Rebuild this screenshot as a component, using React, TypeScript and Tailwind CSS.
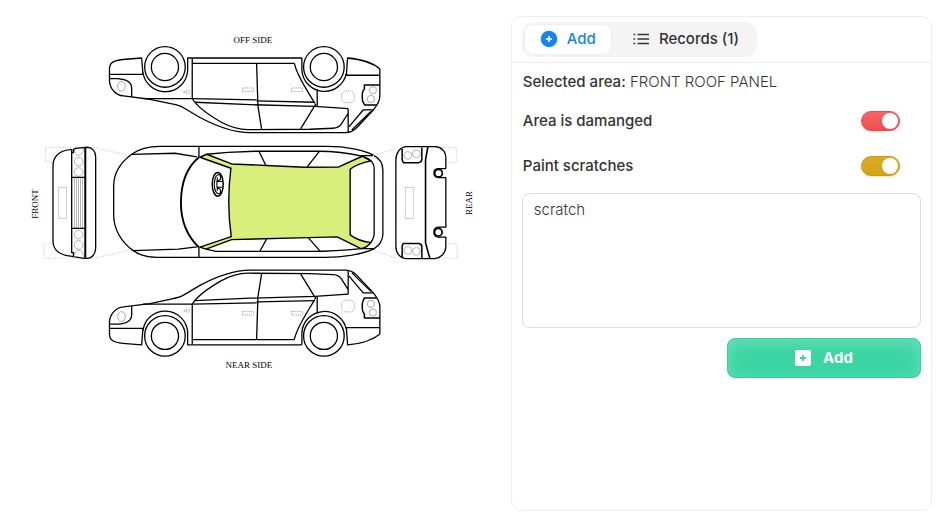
import { useState } from "react";

const ink = { fill: "none", stroke: "#000", strokeWidth: 1.3, strokeLinejoin: "round" as const };
const pale = { fill: "none", stroke: "#aaa", strokeWidth: 1 };
const dots = { fill: "none", stroke: "#999", strokeWidth: 1, strokeDasharray: "1 1" };
const faintDots = { fill: "none", stroke: "#ccc", strokeWidth: 1, strokeDasharray: "1.2 1.2" };

function SideView() {
  return (
    <g>
      <g {...ink}>
        <path d="M109.5 334V322C110 314 116 307.500 123.500 307L150 303.700L172 299Q180 297.500 184 295L200 285.500C216 277 232 270.500 250 270.300H346Q352 270.500 357 275.500L373.500 293Q380 301 380 307V334Q370 343 347.700 345L346.500 327.700H380" />
        <path d="M109.500 328.500H143L141.700 345L123 343.500C113 342.500 109.500 340 109.500 334" />
        <path d="M109.500 324.300H118C127 323.500 131.700 320 131.700 315V306.300" />
        <path d="M143 304.300H192.500L256.700 303M256.700 302L315 300.700" />
        <path d="M195 300.700L250 298.300L315 296.500L348.300 294.300" />
        <path d="M192.300 304.500C197 296 209 288 221 281Q235 273.500 248 273.300L310 273.700L333 274.700Q339 275 341.500 279L348.300 289.700M348.300 270.500V294.300" />
        <path d="M349 276L363.300 293H373.300M352 273L371 291.500" />
        <path d="M261.700 274L258 297L256.700 339.500M300.700 274L316 299M315 299.500C307 313 297 327 294.500 339.500M317.300 296.300V313.500" />
        <path d="M192.300 304V345M192.300 339.700H294.500M192.300 345H302" />
        <path d="M192 345H187.700V332A22.500 22.500 0 0 0 143 330.500" />
        <path d="M302 345V333A22.500 22.500 0 0 1 346.500 329.500" />
        <circle cx="165" cy="336" r="20.300" />
        <circle cx="165" cy="336" r="13.600" />
        <circle cx="324" cy="336" r="20.300" />
        <circle cx="324" cy="336" r="13.600" />
        <path strokeWidth="1.500" d="M377 298H364.700L363.500 300.500Q362.300 302 362.400 307Q362.300 312 364.500 314V318H380" />
      </g>
      <g {...pale}>
        <ellipse cx="121.500" cy="316.700" rx="3.800" ry="5" />
        <circle cx="371" cy="304" r="3.600" />
        <circle cx="373" cy="312.700" r="3.600" />
        <path d="M187 309.500L183.500 311L187 312.500V309.500M188.500 309.500H190Q189.500 311.500 188.700 313" strokeWidth="0.700" />
      </g>
      <g {...dots}>
        <rect x="242.500" y="311.500" width="11" height="3.500" />
        <rect x="291.500" y="311.500" width="11" height="3.500" />
        <rect x="341.700" y="300.300" width="12.700" height="11.700" rx="4" />
      </g>
    </g>
  );
}

function TopView() {
  return (
    <g>
      <g {...ink}>
        <path d="M199 146.500H160C148 146.500 139 149 131.700 154.300C120 163 113.700 173 113.700 186V215C113.700 229 121 242 133.300 250.700C140 255.500 147 257.500 157 257.500H325C343 257.500 364 254 374 249C380 245 383 240 383 234V170C383 163 379 158 373 155C364 150 346 146.500 328 146.500Z" />
        <path d="M131.700 154.500L175 153.300L197 157M133.300 250.700L178.300 249.300L197 247M199 146.500V157M199 247.500V257.500" />
        <path strokeWidth="1.900" d="M199.300 157C187 167 181 184 181 203C181 221 188 237 199.300 247.700" />
        <path d="M206.700 154.300L228 152.500L255 151.300H318Q342 151.300 361 156C369 158 374.300 162 374.300 169V233C374.300 240 369 247 361 248.700Q335 251.500 311.700 251.500H216L206 249.300" />
        <path d="M361 155.700H373.300M361 248.700H375M259 151.300L266 165.500M319.300 151.700L307.300 167M266.700 239L260 251.300M308.300 237.700L320 251" />
      </g>
      <path
        d="M200 157.300L206.700 154.300L231.700 164L266 165.500L305 167.300L339 167L362.300 156.300L371 161C362 163 355 165 350.300 169.300V235Q358 241 371 242.700Q367 247.500 361 248.700L337.300 237L308 237.700L231.700 239.700L206 249.300L200 247.300L231.300 236.700Q226.500 203 231 168.300Z"
        fill="#d9ef7b"
        stroke="#000"
        strokeWidth="1.400"
        strokeLinejoin="round"
      />
      <g fill="none" stroke="#000">
        <ellipse cx="217.800" cy="184.300" rx="5.500" ry="11.800" strokeWidth="1.500" />
        <path
          strokeWidth="1.100"
          d="M220.500 175.500Q218 173.500 216 176.500Q214.300 180 214.300 184.300Q214.300 189 216 192Q218 195 220.500 193M220.500 175.500V179.500L217.500 181.500H222.500M220.500 193V189.500L217.500 187.300H222.500M217.500 177.500Q216.300 184 217.500 191"
        />
      </g>
    </g>
  );
}

function FrontView() {
  return (
    <g>
      <g {...faintDots}>
        <path d="M76 147.500H45.500V162H52M52 243.700H44V258.300H78M91 147L130 155.700M91 259.300L130 250" />
      </g>
      <g {...pale} stroke="#b5b5b5">
        <path d="M74.500 149.500Q75 155.500 79 155.500Q83 155 83.500 149M74.500 255.500Q75 250.500 79 250.300Q83 250.500 83.500 257" />
        <circle cx="78.700" cy="161.700" r="4.300" />
        <circle cx="78.700" cy="172" r="4.300" />
        <circle cx="78.700" cy="234.700" r="4.300" />
        <circle cx="78.700" cy="245" r="4.300" />
        <path d="M74.500 178V228M76.500 178V228M78.500 178V228M80.500 178V228M82.500 178V228" />
      </g>
      <g {...ink}>
        <path d="M71.700 152.700V149.500C60 150.500 53 156 53 166.500V241C53 250 60 255.500 72 256.500L84 258.500H87C92 258.500 95.700 254 95.700 248V157C95.700 151 92 147.300 87 147.300L76 148.500L73.500 149.500V152.700H71.700V252.700H73.500V256.500M71.700 177.500H85M71.700 228.500H85" />
        <path strokeWidth="2" d="M85.300 147.500V258.500" />
      </g>
      <rect x="58.500" y="187.500" width="8" height="31" {...dots} />
    </g>
  );
}

function RearView() {
  return (
    <g>
      <g {...faintDots}>
        <path d="M436 147.500H456.500V162.500H447M448 243.700H457.300V258.300H436M373 155.700L396 148.500M375 251L396 258" />
      </g>
      <g {...ink}>
        <path d="M446 168.700V158C446 151 441 146.700 435 146.700H407C400 147 396 153 396 160V246C396 253 400 258.700 407 258.700H435C441 258 446 253 446 246.700V237.300H441Q434 238 434 232.300Q434 227.300 439 227.300H446V177.700H440Q434 177.500 434 173Q434 168.700 439 168.700H446" />
        <circle cx="438.700" cy="173.200" r="3.800" strokeWidth="1.700" />
        <circle cx="438.500" cy="232.300" r="3.800" strokeWidth="1.700" />
        <path strokeWidth="1.600" d="M428 147L425.700 160V243L430 258.500" />
        <path strokeWidth="1.500" d="M402.300 149V160L403.500 162.700H419Q422 162 422 159V147.500M402.300 258V246L403.500 243.500H419Q422 244 422 247V258" />
      </g>
      <g {...pale} stroke="#b5b5b5">
        <circle cx="408" cy="155.500" r="3.900" />
        <circle cx="416.500" cy="154" r="3.900" />
        <circle cx="408" cy="250.500" r="3.900" />
        <circle cx="416.500" cy="251.500" r="3.900" />
      </g>
      <rect x="405.500" y="187.500" width="8" height="31" {...dots} />
    </g>
  );
}

function CarDiagram() {
  return (
    <svg viewBox="0 0 511 380" className="block w-full" role="img" aria-label="Vehicle areas">
      <g transform="matrix(1 0 0 -1 0 403)">
        <SideView />
      </g>
      <SideView />
      <FrontView />
      <TopView />
      <RearView />
      <g className="font-['Liberation_Serif',serif] text-[9px]" textAnchor="middle" fill="#000">
        <text x="253" y="43">OFF SIDE</text>
        <text x="249" y="368">NEAR SIDE</text>
        <text transform="translate(38 204) rotate(-90)">FRONT</text>
        <text transform="translate(472 203) rotate(-90)">REAR</text>
      </g>
    </svg>
  );
}

function CirclePlus() {
  return (
    <svg viewBox="0 0 18 18" className="size-[18px]" aria-hidden="true">
      <circle cx="9" cy="9" r="8.300" fill="#1784ea" />
      <path d="M9 6V12M6 9H12" stroke="#fff" strokeWidth="1.500" />
    </svg>
  );
}

function ListIcon() {
  return (
    <svg viewBox="0 0 18 18" className="size-[18px]" aria-hidden="true">
      <path d="M5.500 4.500H17M5.500 9H17M5.500 13.500H17" stroke="#333" strokeWidth="1.600" />
      <path d="M1.500 4.500H3.200M1.500 9H3.200M1.500 13.500H3.200" stroke="#333" strokeWidth="1.600" />
    </svg>
  );
}

function SquarePlus() {
  return (
    <svg viewBox="0 0 16 16" className="size-4" aria-hidden="true">
      <rect width="16" height="16" rx="2" fill="#fff" />
      <path d="M8 5V11M5 8H11" stroke="#3ad5a2" strokeWidth="1.800" />
    </svg>
  );
}

const switchBase =
  "h-5 w-[39px] shrink-0 cursor-pointer appearance-none rounded-full border bg-linear-to-b p-px shadow-sm before:block before:size-4 before:rounded-full before:bg-white checked:before:ml-auto";

export default function App() {
  const [tab, setTab] = useState("add");
  const [damaged, setDamaged] = useState(true);
  const [scratches, setScratches] = useState(true);
  const [note, setNote] = useState("scratch");

  return (
    <div className="flex min-h-screen bg-white font-[Inter,sans-serif] text-[15px] leading-6 text-[#333]">
      <div className="w-[54%] shrink-0">
        <CarDiagram />
      </div>
      <div className="flex min-w-0 flex-1 flex-col pt-4 pr-3.5 pb-[3px]">
        <section className="flex-1 rounded-[10px] border border-[#ededed]">
          <header className="border-b border-[#ededed] px-2.5 py-[5px]">
            <div role="tablist" className="flex h-[35px] w-fit rounded-xl bg-[#f4f4f4] p-0.5 font-medium">
              <button
                type="button"
                role="tab"
                aria-selected={tab === "add"}
                onClick={() => setTab("add")}
                className="flex items-center gap-[9px] rounded-[10px] border border-[#eee] bg-white px-[15px] pb-0.5 text-[#1784ea]"
              >
                <CirclePlus />
                Add
              </button>
              <button
                type="button"
                role="tab"
                aria-selected={tab === "records"}
                onClick={() => setTab("records")}
                className="flex items-center gap-[9px] px-4 pb-0.5 pl-5"
              >
                <ListIcon />
                Records (1)
              </button>
            </div>
          </header>
          <div className="px-2.5 pt-[7px]">
            <p className="pl-px">
              <strong className="font-medium">Selected area:</strong> <span className="font-light">FRONT ROOF PANEL</span>
            </p>
            <div className="mt-[15px] flex items-center justify-between pr-[21px] pl-px">
              <label htmlFor="damaged" className="font-medium">Area is damanged</label>
              <input
                id="damaged"
                type="checkbox"
                role="switch"
                checked={damaged}
                onChange={(e) => setDamaged(e.target.checked)}
                className={`${switchBase} border-[#e94b4d] from-[#f46567] to-[#ef4d50]`}
              />
            </div>
            <div className="mt-[21px] flex items-center justify-between pr-[21px] pl-px">
              <label htmlFor="scratches" className="font-medium">Paint scratches</label>
              <input
                id="scratches"
                type="checkbox"
                role="switch"
                checked={scratches}
                onChange={(e) => setScratches(e.target.checked)}
                className={`${switchBase} border-[#c99a12] from-[#d9ac26] to-[#d3a312]`}
              />
            </div>
            <textarea
              aria-label="Notes"
              value={note}
              onChange={(e) => setNote(e.target.value)}
              className="mt-[15px] block h-[135px] w-full resize-none rounded-lg border border-[#ddd] px-[11px] py-1 font-light"
            />
            <button
              type="button"
              className="mt-2.5 ml-auto flex h-10 w-[194px] items-center justify-center gap-3 rounded-lg border border-[#38cf9c] bg-[#3ad5a2] font-bold text-white shadow-[inset_0_4px_16px_rgba(255,255,255,0.25)]"
            >
              <SquarePlus />
              Add
            </button>
          </div>
        </section>
      </div>
    </div>
  );
}
